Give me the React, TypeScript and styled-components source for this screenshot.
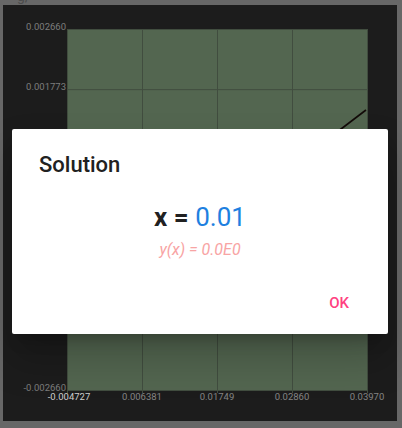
import styled, { createGlobalStyle } from "styled-components";

const GlobalStyle = createGlobalStyle`
  body {
    margin: 0;
    background-color: #676767;
    font-family: Roboto, "Liberation Sans", sans-serif;
  }
`;

const Screen = styled.div`
  width: 402px;
  height: 428px;
  overflow: hidden;
`;

const Header = styled.div`
  height: 5px;
  overflow: hidden;
  padding-left: 17px;
  span {
    display: block;
    margin-top: -12px;
    font-size: 14px;
    line-height: 16px;
    color: #4c4c4c;
  }
`;

const Panel = styled.div`
  position: relative;
  width: 394px;
  height: 416px;
  margin-left: 3px;
  background-color: #1c1c1c;
`;

const Dialog = styled.div`
  position: absolute;
  left: 9px;
  top: 124px;
  width: 376px;
  height: 205px;
  box-sizing: border-box;
  padding: 22px 27px 0;
  display: flex;
  flex-direction: column;
  background-color: #ffffff;
  border-radius: 2px;
  box-shadow: 0 11px 15px -7px rgba(0, 0, 0, 0.25),
    0 24px 38px 3px rgba(0, 0, 0, 0.18);
`;

const Title = styled.h2`
  margin: 0;
  font-size: 22px;
  line-height: 28px;
  font-weight: 500;
  color: #212121;
`;

const Result = styled.div`
  margin-top: 22px;
  text-align: center;
  font-size: 26px;
  line-height: 32px;
  color: #212121;
  b {
    font-weight: 700;
  }
`;

const Value = styled.span`
  color: #1e80e0;
`;

const Residual = styled.div`
  margin-top: 7px;
  text-align: center;
  font-size: 16px;
  line-height: 20px;
  font-style: italic;
  color: #f8a4a4;
`;

const Actions = styled.div`
  display: flex;
  justify-content: flex-end;
  margin-top: 33px;
  margin-right: 12px;
`;

const OkButton = styled.button`
  border: none;
  background: none;
  padding: 0;
  font-family: Roboto, "Liberation Sans", sans-serif;
  font-size: 15px;
  line-height: 20px;
  font-weight: 500;
  color: #ff4081;
  cursor: pointer;
`;

const yLabels = ["0.002660", "0.001773", "", "", "", "", "-0.002660"];
const xLabels = ["-0.004727", "0.006381", "0.01749", "0.02860", "0.03970"];

const PLOT = { left: 64, top: 24, width: 300, height: 361 };

function Chart() {
  const rowH = PLOT.height / 6;
  const colW = PLOT.width / 4;
  return (
    <svg width={394} height={416} style={{ display: "block" }}>
      <rect
        x={PLOT.left}
        y={PLOT.top}
        width={PLOT.width}
        height={PLOT.height}
        fill="#536650"
      />
      {yLabels.map((label, i) => {
        const y = PLOT.top + rowH * i;
        return (
          <g key={"y" + i}>
            <line
              x1={PLOT.left}
              x2={PLOT.left + PLOT.width}
              y1={y + 0.5}
              y2={y + 0.5}
              stroke="#414d3f"
              strokeWidth={1}
            />
            {label && (
              <text
                x={PLOT.left - 1}
                y={y + 1}
                textAnchor="end"
                fontSize="9.5"
                fill="#7d7d7d"
                fontFamily="Roboto, sans-serif"
              >
                {label}
              </text>
            )}
          </g>
        );
      })}
      {xLabels.map((label, i) => {
        const x = PLOT.left + colW * i;
        return (
          <g key={"x" + i}>
            <line
              x1={x + 0.5}
              x2={x + 0.5}
              y1={PLOT.top}
              y2={PLOT.top + PLOT.height + 3}
              stroke="#414d3f"
              strokeWidth={1}
            />
            <text
              x={i === 0 ? x + 2 : x}
              y={395}
              textAnchor="middle"
              fontSize="9.5"
              fill={i === 0 ? "#cfcfcf" : "#858585"}
              fontFamily="Roboto, sans-serif"
            >
              {label}
            </text>
          </g>
        );
      })}
      <line x1={290} y1={160.5} x2={363} y2={105} stroke="#120a08" strokeWidth={1.6} />
    </svg>
  );
}

export default function App() {
  return (
    <>
      <GlobalStyle />
      <Screen>
        <Header>
          <span>g,</span>
        </Header>
        <Panel>
          <Chart />
          <Dialog>
            <Title>Solution</Title>
            <Result>
              <b>x =</b> <Value>0.01</Value>
            </Result>
            <Residual>y(x) = 0.0E0</Residual>
            <Actions>
              <OkButton>OK</OkButton>
            </Actions>
          </Dialog>
        </Panel>
      </Screen>
    </>
  );
}
